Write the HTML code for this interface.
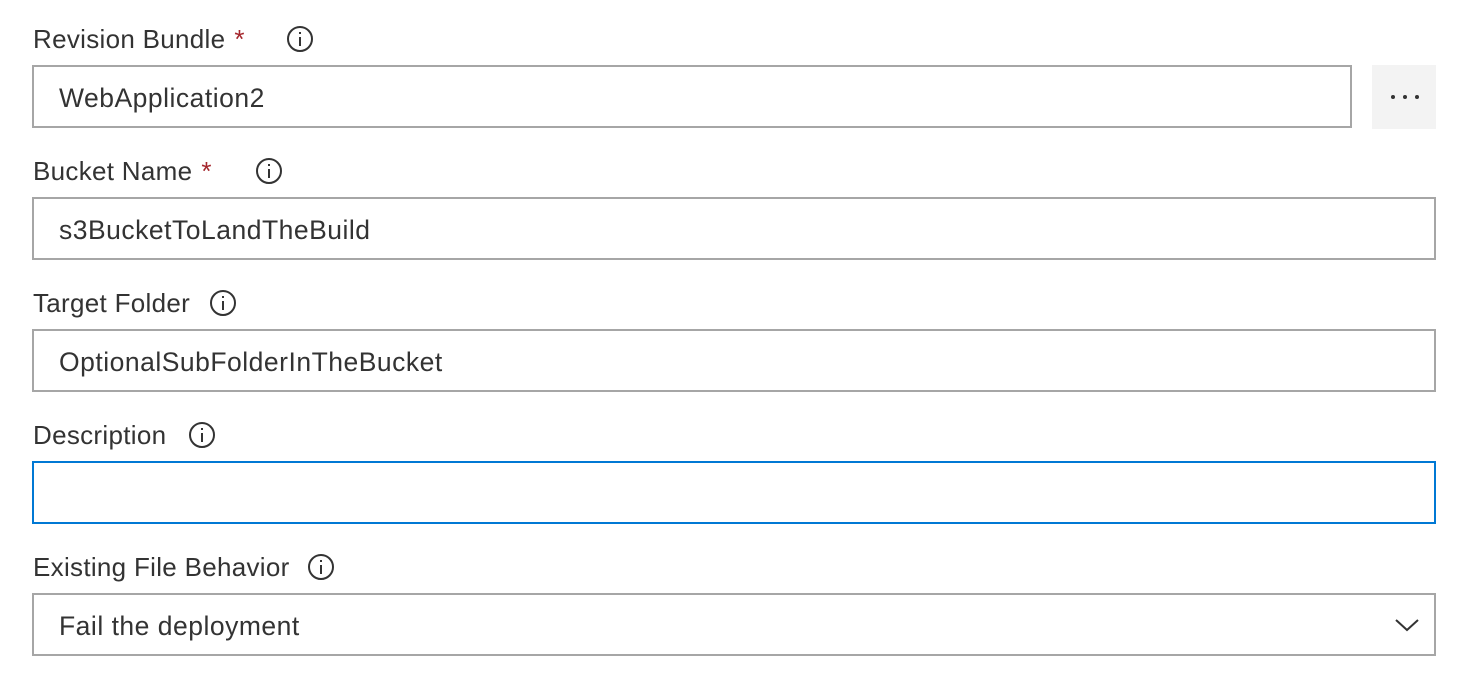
<!DOCTYPE html>
<html><head><style>
body{margin:0;background:#fff;width:1477px;height:690px;position:relative;font-family:"Liberation Sans",sans-serif;color:#333;overflow:hidden}
.lbl{position:absolute;left:33px;font-size:26px;letter-spacing:0.3px;line-height:30px;color:#333;white-space:nowrap}
.req{color:#a4262c;margin-left:9px}
.inp{position:absolute;left:32px;width:1400px;height:59px;border:2px solid #a6a6a6;background:#fff;box-sizing:content-box}
.inp span{position:absolute;left:25px;top:16px;font-size:26.5px;letter-spacing:0.5px;line-height:30px;color:#333;white-space:nowrap}
.ic{position:absolute;width:22px;height:22px;border:2px solid #333;border-radius:50%}
.ic:before{content:"";position:absolute;left:10px;top:9px;width:2px;height:9px;background:#333}
.ic:after{content:"";position:absolute;left:10px;top:4px;width:2px;height:2px;background:#333}
</style></head><body>
<div class="lbl" style="top:24px">Revision Bundle<span class="req">*</span></div>
<div class="ic" style="left:287px;top:26px"></div>
<div class="inp" style="top:65px;width:1316px"><span>WebApplication2</span></div>
<div style="position:absolute;left:1372px;top:65px;width:64px;height:64px;background:#f3f3f3">
<div style="position:absolute;top:30px;left:19px;width:4px;height:4px;border-radius:50%;background:#333;box-shadow:12px 0 #333,24px 0 #333"></div></div>

<div class="lbl" style="top:156px">Bucket Name<span class="req">*</span></div>
<div class="ic" style="left:256px;top:158px"></div>
<div class="inp" style="top:197px"><span>s3BucketToLandTheBuild</span></div>

<div class="lbl" style="top:288px">Target Folder</div>
<div class="ic" style="left:210px;top:290px"></div>
<div class="inp" style="top:329px"><span>OptionalSubFolderInTheBucket</span></div>

<div class="lbl" style="top:420px">Description</div>
<div class="ic" style="left:189px;top:422px"></div>
<div class="inp" style="top:461px;border-color:#0078d4"></div>

<div class="lbl" style="top:552px">Existing File Behavior</div>
<div class="ic" style="left:308px;top:554px"></div>
<div class="inp" style="top:593px"><span>Fail the deployment</span>
<svg style="position:absolute;left:1360px;top:22px" width="26" height="16" viewBox="0 0 26 16"><path d="M2 3 L13 13 L24 3" fill="none" stroke="#333" stroke-width="2"/></svg></div>
</body></html>
